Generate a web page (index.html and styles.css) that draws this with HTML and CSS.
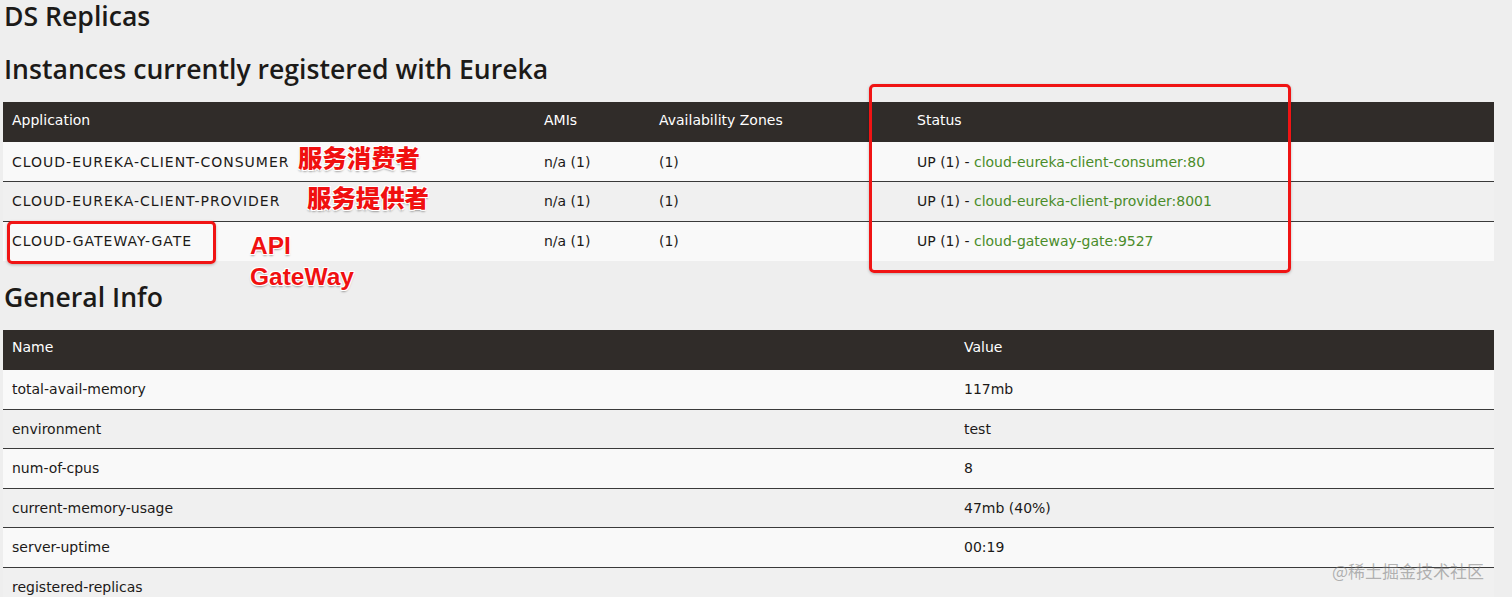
FILE: index.html
```html
<!DOCTYPE html>
<html lang="en">
<head>
  <meta charset="UTF-8" />
  <title>Eureka</title>
  <link rel="stylesheet" href="styles.css">
</head>
<body>

<div class="page">
  <h1>DS Replicas</h1>

  <h2>Instances currently registered with Eureka</h2>
  <table class="grid apps">
    <colgroup>
      <col class="c-app"><col class="c-ami"><col class="c-zone"><col>
    </colgroup>
    <thead>
      <tr><th>Application</th><th>AMIs</th><th>Availability Zones</th><th>Status</th></tr>
    </thead>
    <tbody>
      <tr>
        <td class="app">CLOUD-EUREKA-CLIENT-CONSUMER</td><td>n/a (1)</td><td>(1)</td>
        <td>UP (1) - <a href="#">cloud-eureka-client-consumer:80</a></td>
      </tr>
      <tr>
        <td class="app">CLOUD-EUREKA-CLIENT-PROVIDER</td><td>n/a (1)</td><td>(1)</td>
        <td>UP (1) - <a href="#">cloud-eureka-client-provider:8001</a></td>
      </tr>
      <tr>
        <td class="app">CLOUD-GATEWAY-GATE</td><td>n/a (1)</td><td>(1)</td>
        <td>UP (1) - <a href="#">cloud-gateway-gate:9527</a></td>
      </tr>
    </tbody>
  </table>

  <h2 class="info-title">General Info</h2>
  <table class="grid info">
    <colgroup>
      <col class="c-name"><col>
    </colgroup>
    <thead>
      <tr><th>Name</th><th>Value</th></tr>
    </thead>
    <tbody>
      <tr><td>total-avail-memory</td><td>117mb</td></tr>
      <tr><td>environment</td><td>test</td></tr>
      <tr><td>num-of-cpus</td><td>8</td></tr>
      <tr><td>current-memory-usage</td><td>47mb (40%)</td></tr>
      <tr><td>server-uptime</td><td>00:19</td></tr>
      <tr><td>registered-replicas</td><td></td></tr>
    </tbody>
  </table>
</div>

<!-- annotations drawn over the screenshot -->
<div class="mark box-status"></div>
<div class="mark box-gate"></div>
<div class="note note-consumer">服务消费者</div>
<div class="note note-provider">服务提供者</div>
<div class="note note-gate">API<br>GateWay</div>
<div class="watermark">@稀土掘金技术社区</div>

</body>
</html>
```

FILE: styles.css
```css
* { box-sizing: border-box; }
html, body { height: 100%; }
body {
  margin: 0;
  background: #eeeeee;
  color: #1c1a18;
  font-family: "DejaVu Sans", "Open Sans", sans-serif;
  font-size: 14px;
  overflow: hidden;
  position: relative;
}
.page {
  padding: 0 18px 0 3px;
}
h1, h2 {
  font-family: "Open Sans", "Noto Sans", sans-serif;
  font-weight: 600;
  font-size: 26.6px;
  color: #1c1a18;
  margin: 0;
  padding-left: 1px;
}
h1 {
  line-height: 32px;
  margin-bottom: 21px;
}
h2 {
  line-height: 32px;
  margin-bottom: 17px;
}
h2.info-title {
  margin-top: 21px;
  margin-bottom: 18px;
  line-height: 30px;
}
.grid {
  width: 100%;
  border-collapse: collapse;
  table-layout: fixed;
}
.grid th {
  background: #302c29;
  color: #fff;
  font-weight: 400;
  text-align: left;
  height: 40px;
  padding: 0 9px 5px;
}
.grid td {
  height: 39.5px;
  padding: 0 9px;
  border-top: 1px solid #3a3a3a;
  background: #f9f9f9;
}
.grid td.app { letter-spacing: 1px; }
.grid tbody tr:first-child td { border-top: none; }
.grid tbody tr:nth-child(even) td { background: #f0f0f0; }
.grid a {
  color: #4a8c2a;
  text-decoration: none;
}
.c-app { width: 532px; }
.c-ami { width: 115px; }
.c-zone { width: 258px; }
.c-name { width: 952px; }

.mark {
  position: absolute;
  border: 3px solid #f01414;
  border-radius: 5px;
  box-shadow: 0 1px 3px rgba(0,0,0,0.25);
}
.box-status { left: 869px; top: 84px; width: 422px; height: 189px; }
.box-gate { left: 7px; top: 221px; width: 209px; height: 43px; }
.note {
  position: absolute;
  color: #f01010;
  font-family: "Noto Sans CJK SC", "Liberation Sans", sans-serif;
  font-weight: 900;
  font-size: 24.4px;
  line-height: 28px;
  text-shadow:
    -1px -1px 0 #fff, 1px -1px 0 #fff, -1px 1px 0 #fff, 1px 1px 0 #fff,
    0 2px 2px rgba(0,0,0,0.35);
}
.note-consumer { left: 298px; top: 143px; }
.note-provider { left: 307px; top: 183px; }
.note-gate {
  left: 250px;
  top: 230px;
  font-family: "Liberation Sans", sans-serif;
  font-weight: 700;
  font-size: 24.5px;
  line-height: 31px;
}
.watermark {
  position: absolute;
  left: 1332px;
  top: 558px;
  font-family: "Noto Sans CJK SC", sans-serif;
  font-size: 17px;
  color: rgba(120,120,120,0.55);
}
```
